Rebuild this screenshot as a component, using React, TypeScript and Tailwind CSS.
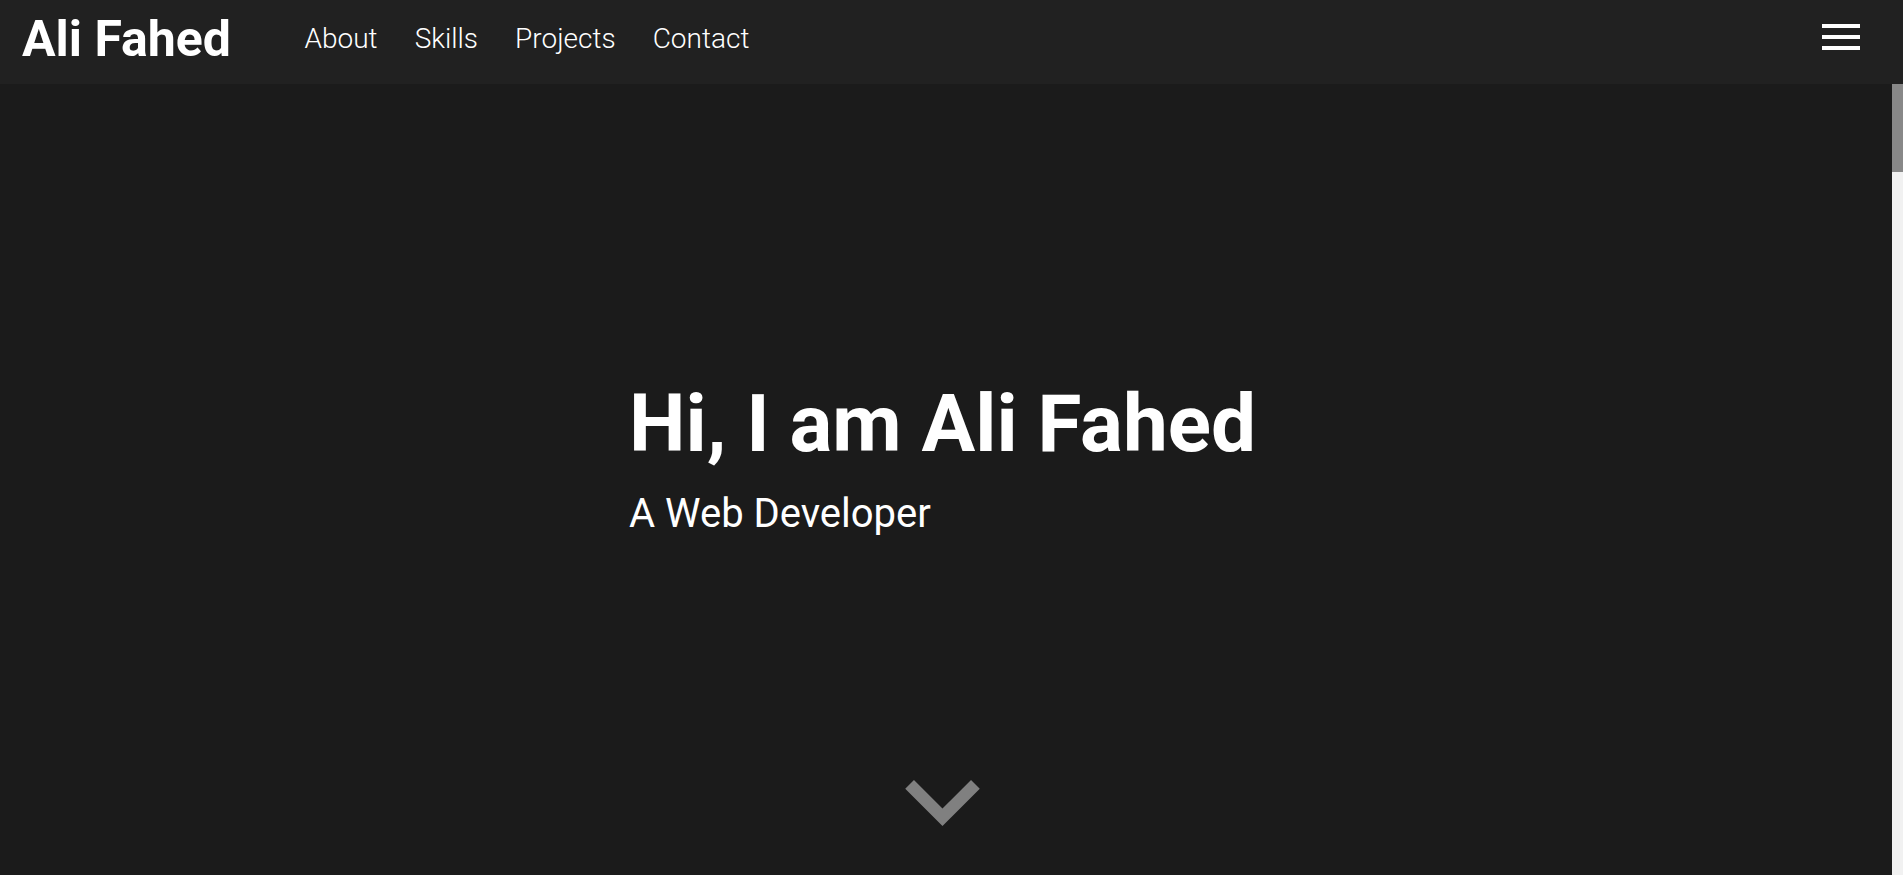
const NAV_LINKS = [
  { href: '#about', label: 'About' },
  { href: '#skills', label: 'Skills' },
  { href: '#projects', label: 'Projects' },
  { href: '#contact', label: 'Contact' },
];

export default function App() {
  return (
    <div className="h-screen flex flex-col bg-[#1b1b1b] text-white font-['Roboto',_'Liberation_Sans',_sans-serif]">
      {/* Top bar */}
      <header className="h-[84px] shrink-0 bg-[#212121] flex items-center pl-[22px] pr-[43px] pb-[6px]">
        <a href="#" className="text-[50px] font-bold leading-none text-white">
          Ali Fahed
        </a>
        <nav className="ml-[55px] flex items-center">
          {NAV_LINKS.map((link) => (
            <a
              key={link.href}
              href={link.href}
              className="px-[18.5px] text-[28px] font-light leading-none text-white hover:text-gray-300"
            >
              {link.label}
            </a>
          ))}
        </nav>
        <button type="button" aria-label="Open menu" className="ml-auto mb-[4px] flex flex-col gap-[6.5px]">
          <span className="block w-[38px] h-[4.5px] bg-white" />
          <span className="block w-[38px] h-[4.5px] bg-white" />
          <span className="block w-[38px] h-[4.5px] bg-white" />
        </button>
      </header>

      <div className="flex-1 flex min-h-0">
        {/* Hero */}
        <main className="flex-1 flex flex-col items-center pr-[7px]">
          <div className="pt-[300px]">
            <h1 className="text-[80px] font-bold leading-none text-white">Hi, I am Ali Fahed</h1>
            <p className="mt-[30px] text-[40px] font-normal leading-none text-white">A Web Developer</p>
          </div>
          <a href="#about" aria-label="Scroll down" className="mt-auto mb-[49px]">
            <svg width="75" height="46" viewBox="0 0 74.2 45.8" aria-hidden="true">
              <polygon points="0,8.7 37.1,45.8 74.2,8.7 65.5,0 37.1,28.4 8.7,0" fill="#808080" />
            </svg>
          </a>
        </main>

        {/* Scrollbar */}
        <div className="w-[11px] shrink-0 bg-[#f1f1f1]">
          <div className="h-[88px] bg-[#888]" />
        </div>
      </div>
    </div>
  );
}
